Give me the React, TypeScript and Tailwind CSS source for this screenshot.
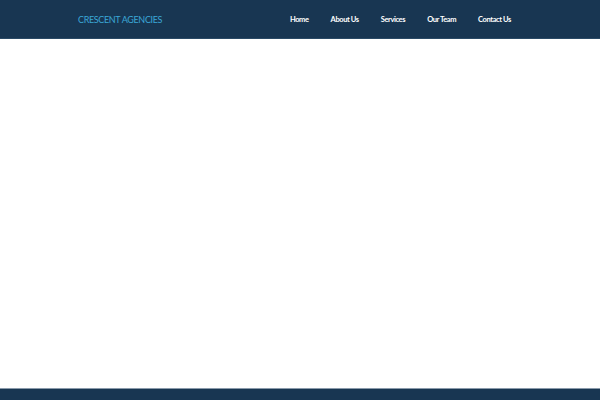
import React from 'react';

const links = ['Home', 'About Us', 'Services', 'Our Team', 'Contact Us'];

export default function App() {
  return (
    <div className="flex h-[400px] w-full flex-col bg-white font-['Lato',sans-serif]">
      <header className="h-[39px] shrink-0 border-b border-[#2a4a66] bg-[#183652]">
        <div className="flex h-full items-center justify-between pt-[1px] pl-[78px] pr-[89px]">
          <span className="text-[9px] tracking-[-0.35px] text-[#3ba7d6]">CRESCENT AGENCIES</span>
          <nav className="flex items-center gap-[22px] pt-[1px]">
            {links.map((l) => (
              <a key={l} href="#" className="text-[7.5px] font-bold tracking-[-0.4px] text-white">
                {l}
              </a>
            ))}
          </nav>
        </div>
      </header>
      <main className="flex-1" />
      <footer className="h-[12px] shrink-0 border-t border-[#8a9aab] bg-[#183652]" />
    </div>
  );
}
